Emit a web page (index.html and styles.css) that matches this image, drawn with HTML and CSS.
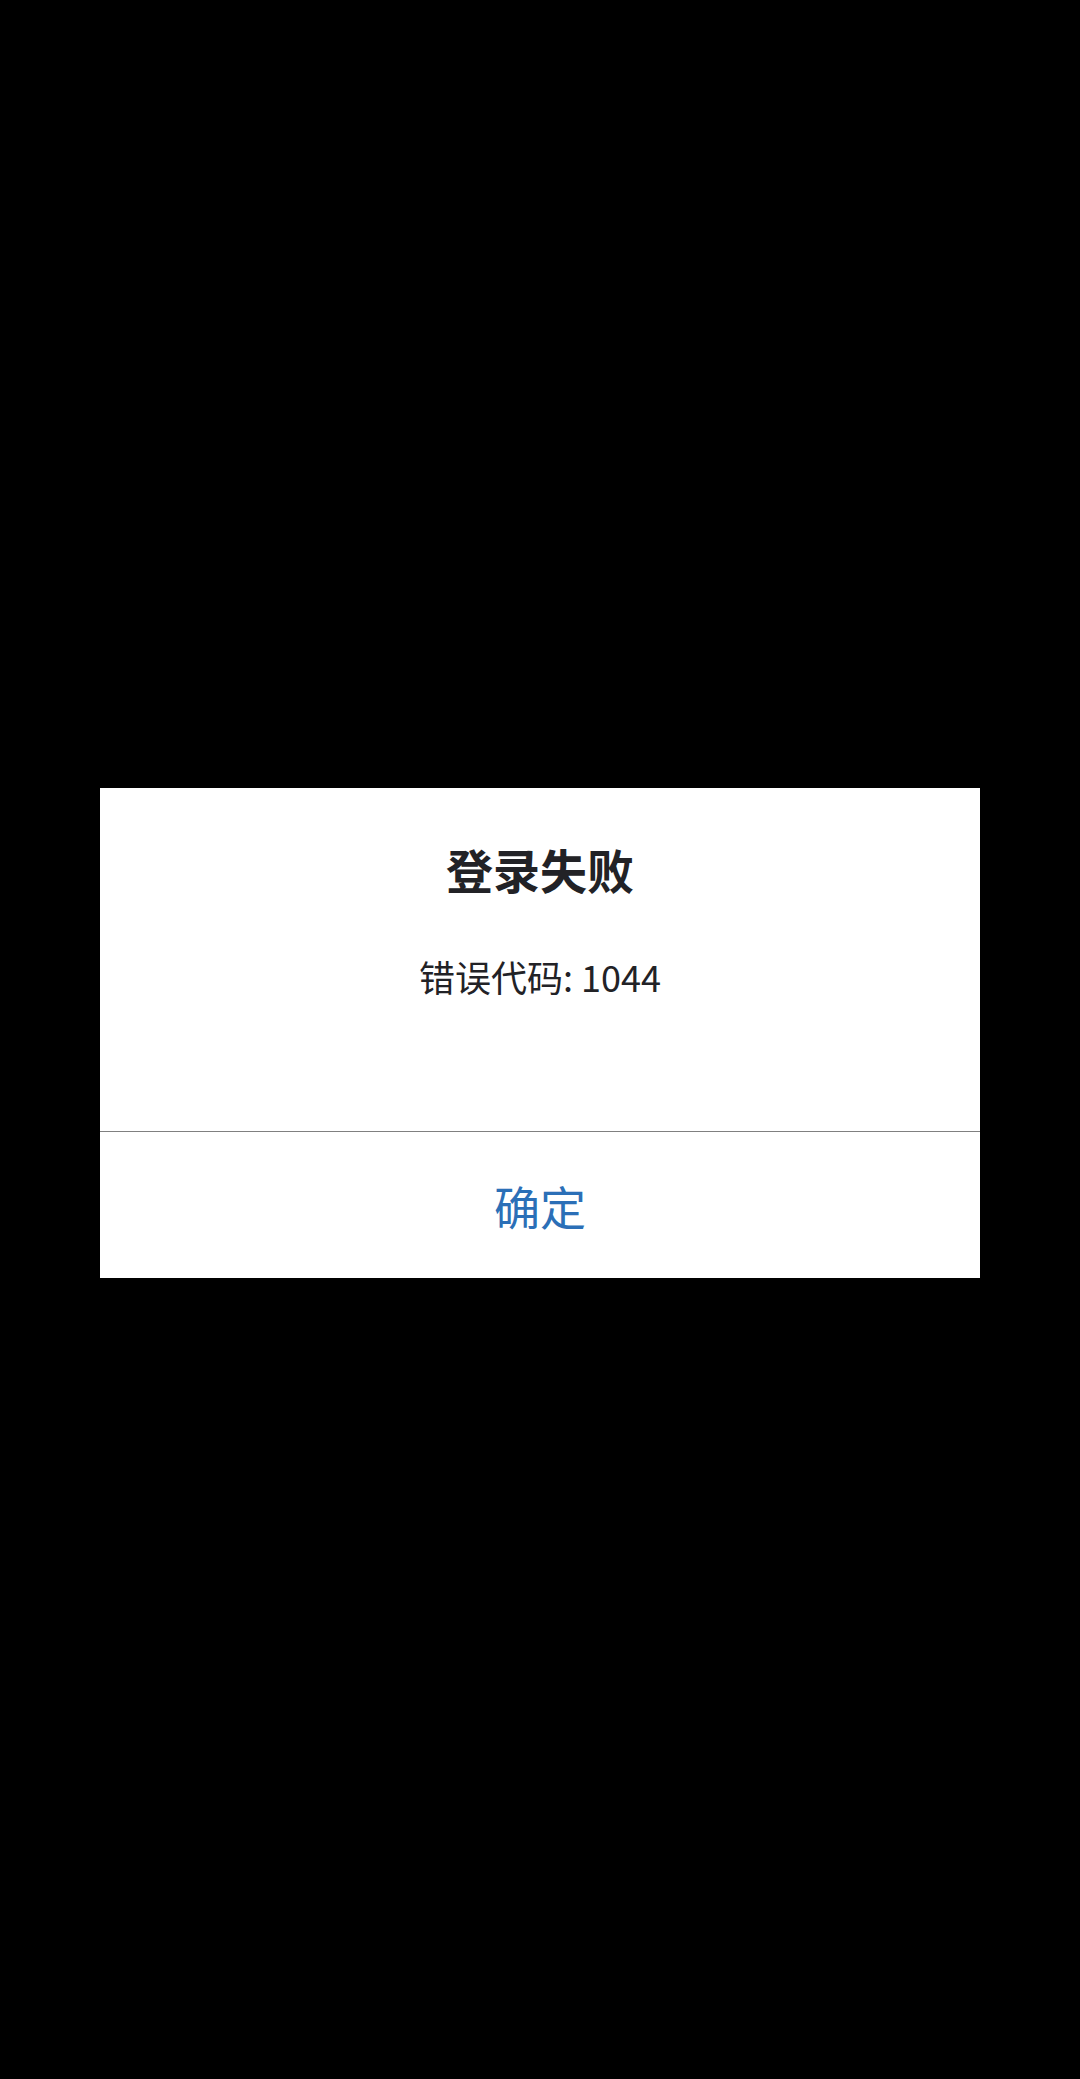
FILE: index.html
```html
<!DOCTYPE html>
<html lang="zh-CN">
<head>
<meta charset="utf-8">
<title>登录失败</title>
<link rel="stylesheet" href="styles.css">
</head>
<body>
<div class="screen">
  <div class="dialog">
    <div class="dialog-content">
      <div class="dialog-title">登录失败</div>
      <div class="dialog-message">错误代码: 1044</div>
    </div>
    <div class="dialog-actions">
      <div class="dialog-button">确定</div>
    </div>
  </div>
</div>
</body>
</html>
```

FILE: styles.css
```css
html, body {
  margin: 0;
  padding: 0;
  background: #000;
}
.screen {
  width: 1080px;
  height: 2079px;
  display: flex;
  justify-content: center;
  align-items: flex-start;
  padding-top: 788px;
  box-sizing: border-box;
  font-family: "Noto Sans CJK SC", "Noto Sans", sans-serif;
}
.dialog {
  width: 880px;
  background: #fff;
  display: flex;
  flex-direction: column;
}
.dialog-content {
  height: 343px;
  padding-top: 49px;
  box-sizing: border-box;
  display: flex;
  flex-direction: column;
  align-items: center;
}
.dialog-title {
  font-size: 47px;
  font-weight: 700;
  line-height: 64px;
  color: #222226;
}
.dialog-message {
  margin-top: 50px;
  font-size: 36px;
  line-height: 50px;
  color: #222226;
}
.dialog-actions {
  border-top: 1px solid #808080;
  height: 146px;
  display: flex;
  align-items: center;
  justify-content: center;
}
.dialog-button {
  font-size: 46px;
  line-height: 64px;
  color: #2b6fb7;
}
```
